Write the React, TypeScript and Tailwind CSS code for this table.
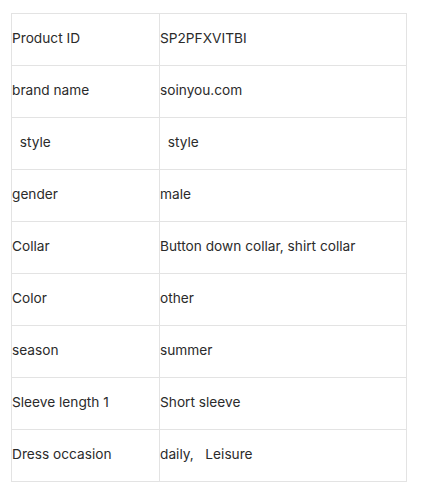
const rows: [string, string][] = [
  ['Product ID', 'SP2PFXVITBI'],
  ['brand name', 'soinyou.com'],
  ['\u00a0\u00a0style', '\u00a0\u00a0style'],
  ['gender', 'male'],
  ['Collar', 'Button down collar, shirt collar'],
  ['Color', 'other'],
  ['season', 'summer'],
  ['Sleeve length 1', 'Short sleeve'],
  ['Dress occasion', 'daily,\u00a0\u00a0\u00a0Leisure'],
];

export default function App() {
  return (
    <div className="min-h-[491px] bg-white pl-[11px] pt-[13px] font-['Inter',sans-serif] text-[13.7px] text-[#2b2b2b]">
      <table className="w-[396px] table-fixed border-collapse">
        <colgroup>
          <col className="w-[148px]" />
          <col />
        </colgroup>
        <tbody>
          {rows.map(([k, v]) => (
            <tr key={k} className="h-[52px]">
              <td className="border border-[#e3e3e3] p-0 pb-[2px] align-middle">{k}</td>
              <td className="border border-[#e3e3e3] p-0 pb-[2px] align-middle">{v}</td>
            </tr>
          ))}
        </tbody>
      </table>
    </div>
  );
}
